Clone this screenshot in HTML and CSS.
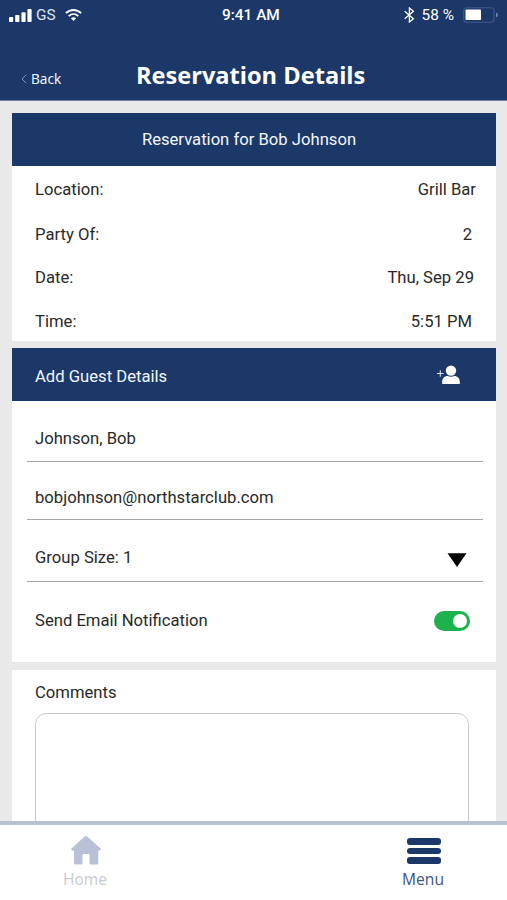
FILE: index.html
```html
<!DOCTYPE html>
<html lang="en">
<head>
<meta charset="utf-8">
<title>Reservation Details</title>
<link rel="stylesheet" href="styles.css">
</head>
<body>
<div class="app">
  <header class="header">
    <div class="status">
      <div class="status-left">
        <svg class="signal" width="24" height="15" viewBox="0 0 24 15" fill="#fff"><rect x="0" y="9" width="4.2" height="5" rx=".8"/><rect x="6.2" y="7" width="4.2" height="7" rx=".8"/><rect x="12.400" y="4.2" width="4.2" height="9.800" rx=".8"/><rect x="18.400" y="1" width="4.200" height="13" rx=".8"/></svg>
        <span class="carrier">GS</span>
        <svg class="wifi" width="17" height="14" viewBox="0 0 17 14" fill="none" stroke="#fff" stroke-width="1.9"><path d="M.9 5.2C5.2.9 11.8.9 16.1 5.2"/><path d="M3.7 8.1c2.8-2.7 6.8-2.7 9.6 0"/><path d="M5.9 10.2c1.5-1.3 3.7-1.3 5.2 0L8.500 13z" fill="#fff" stroke="none"/></svg>
      </div>
      <span class="clock">9:41 AM</span>
      <div class="status-right">
        <svg class="bluetooth" width="11" height="16" viewBox="0 0 11 16" fill="none" stroke="#fff" stroke-width="1.3"><path d="M.7 4.300l8.700 7.400-4 3.300V1l4 3.300-8.700 7.400"/></svg>
        <span class="percent">58 %</span>
        <svg class="battery" width="36" height="16" viewBox="0 0 36 16"><rect x=".7" y=".7" width="30.300" height="14.600" rx="3" fill="none" stroke="#415a86" stroke-width="1.1"/><rect x="2.500" y="2.500" width="15.500" height="10.500" rx=".8" fill="#fff"/><path d="M33 5.500q2 .8 2 2.500t-2 2.500z" fill="#7184a6"/></svg>
      </div>
    </div>
    <div class="nav">
      <a class="back"><svg width="6" height="10" viewBox="0 0 6 10" fill="none" stroke="#8798b5" stroke-width="1"><path d="M5.200.8L1 5l4.200 4.200"/></svg><span>Back</span></a>
      <h1 class="title">Reservation Details</h1>
    </div>
  </header>
  <main class="content">
    <section class="card summary">
      <h2 class="banner banner-center">Reservation for Bob Johnson</h2>
      <dl class="rows">
        <div class="row row-location"><dt>Location:</dt><dd>Grill Bar</dd></div>
        <div class="row row-party"><dt>Party Of:</dt><dd>2</dd></div>
        <div class="row row-date"><dt>Date:</dt><dd>Thu, Sep 29</dd></div>
        <div class="row row-time"><dt>Time:</dt><dd>5:51 PM</dd></div>
      </dl>
    </section>
    <section class="card guest">
      <h2 class="banner"><span class="guest-title">Add Guest Details</span>
        <svg class="add" width="24" height="20" viewBox="0 0 24 20"><path d="M0 8.500h6.600M3.300 5.200v6.600" stroke="#dbe3ef" stroke-width="1.100"/><circle cx="14" cy="5.600" r="5.200" fill="#fff"/><path d="M5.200 19v-2.500c0-3.300 2.600-5.400 5.500-5.400q3.300 1.400 6.600 0c2.900 0 5.500 2.100 5.500 5.400V19z" fill="#fff"/></svg>
      </h2>
      <div class="field field-name"><span class="name">Johnson, Bob</span></div>
      <div class="field field-email"><span class="email">bobjohnson@northstarclub.com</span></div>
      <div class="field field-size"><span class="size">Group Size: 1</span><svg class="caret" width="20" height="14" viewBox="0 0 20 14"><path d="M.500.300h19L10 14z"/></svg></div>
      <div class="notify"><span class="notify-label">Send Email Notification</span><span class="toggle"><span class="knob"></span></span></div>
    </section>
    <section class="card comments">
      <label class="comments-label">Comments</label>
      <div class="textbox"></div>
    </section>
  </main>
  <nav class="tabs">
    <a class="tab tab-home"><svg width="30" height="29" viewBox="0 0 30 29" fill="#b8c1d5"><path d="M13.700.5q1.300-1 2.600 0L29.300 12.200q1.300 1.700-.8 2.300H27.300V27q0 1.500-1.500 1.500h-6q-1.300 0-1.300-1.300V19q0-1-1-1h-5q-1 0-1 1v8.200q0 1.300-1.300 1.300H4.500Q3 28.500 3 27V14.500H1.500q-2.100-.6-.8-2.300z"/></svg><span>Home</span></a>
    <a class="tab tab-menu"><span class="burger"><i></i><i></i><i></i></span><span>Menu</span></a>
  </nav>
</div>
</body>
</html>
```
FILE: styles.css
```css
* { box-sizing: border-box; }
body { margin: 0; font-family: Roboto, sans-serif; font-size: 16.65px; line-height: 20px; color: #292929; }
h1, h2, dl, dd { margin: 0; }
svg { display: block; flex: none; }
.app { width: 507px; height: 900px; display: flex; flex-direction: column; overflow: hidden; background: #e9e9e9; }
.header { flex: none; height: 101px; background: #1c3869; border-bottom: 1px solid #7081a3; color: #fff; }
.status { height: 30px; display: grid; grid-template-columns: 213px auto 1fr; align-items: center; padding: 0 8px 0 9px; font-size: 15px; }
.status-left, .status-right { display: flex; align-items: center; }
.status-right { justify-content: flex-end; }
.carrier { margin-left: 3px; font-size: 15.4px; color: #dce3ee; }
.wifi { margin-left: 9px; }
.clock { font-weight: 500; font-size: 15.4px; }
.percent { margin: 0 9px 0 7px; font-size: 15.4px; }
.nav { height: 70px; display: grid; grid-template-columns: 136px 1fr; align-items: center; padding-top: 20px; }
.back { display: flex; align-items: center; gap: 4px; padding: 7px 0 0 21px; font-family: "Open Sans", sans-serif; font-size: 13.7px; }
.title { font-family: "Open Sans", sans-serif; font-weight: 700; font-size: 23.6px; line-height: 32px; white-space: nowrap; }
.content { flex: 1; min-height: 0; overflow: hidden; padding: 12px 11px 0 12px; display: flex; flex-direction: column; }
.card { flex: none; background: #fff; }
.summary { height: 228px; margin-bottom: 7px; }
.guest { height: 314px; margin-bottom: 8px; }
.banner { height: 53px; display: flex; align-items: center; justify-content: space-between; padding: 4px 35px 0 23px; background: #1c3869; color: #f3f6fb; font-size: 16.65px; font-weight: 400; }
.banner-center { justify-content: center; padding: 0 10px 0 0; }
.add { margin-top: -4px; }
.row { display: flex; align-items: center; justify-content: space-between; padding-left: 23px; height: 44px; }
.row-location { height: 47px; padding-right: 20px; }
.row-party { padding-right: 24px; height: 43px; }
.row-date { height: 43px; padding-right: 22px; }
.row-time { height: 45px; padding-right: 24px; }
.field { display: flex; align-items: center; justify-content: space-between; margin: 0 13px 0 15px; padding: 0 16px 0 8px; border-bottom: 1px solid #a5a5a5; }
.field-name { height: 61px; padding-top: 15px; }
.field-email { height: 58px; padding-top: 15px; }
.field-size { height: 62px; padding-top: 15px; }
.caret { margin-top: 3px; }
.notify { height: 76px; padding: 1px 26px 0 23px; display: flex; align-items: center; justify-content: space-between; }
.toggle { width: 36px; height: 20px; margin-top: 1px; padding: 3px; border-radius: 10px; background: #1db24b; display: flex; justify-content: flex-end; }
.knob { width: 14px; height: 14px; border-radius: 50%; background: #fff; }
.comments { height: 230px; padding: 13px 27px 0 23px; }
.comments-label { display: block; }
.textbox { height: 200px; margin-top: 10px; border: 1px solid #cbcbcb; border-radius: 11px; }
.tabs { flex: none; height: 79px; display: flex; justify-content: space-between; padding: 0 62px 0 63px; background: #fff; border-top: 4px solid #b8c0d2; }
.tab { display: flex; flex-direction: column; align-items: center; width: 44px; padding-top: 11px; font-family: "Open Sans", sans-serif; font-size: 15.6px; line-height: 20px; color: #c8cad0; }
.tab-home svg { margin-left: 2px; }
.tab-home span { margin-top: 4px; }
.tab-menu { color: #415582; padding-top: 13px; }
.burger { width: 34px; display: flex; flex-direction: column; gap: 3px; margin: 0 0 5px 1px; }
.burger i { height: 6.500px; border-radius: 3px; background: #1c3869; }
```
